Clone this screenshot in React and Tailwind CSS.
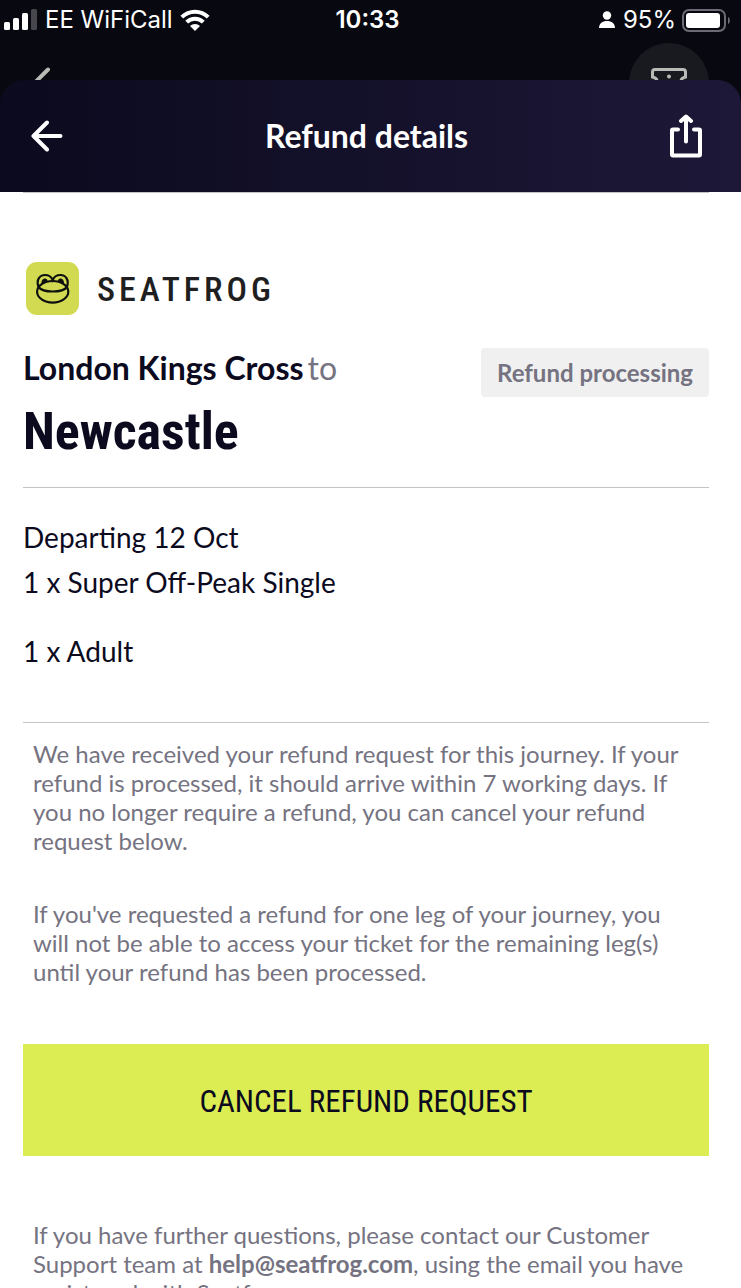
const DIVIDER = "border-t border-[#c4c4c6]"
const CONDENSED = "font-['Roboto_Condensed','Liberation_Sans_Narrow',Roboto,sans-serif]"
const NOTE = "px-[10px] text-2xl leading-[29px] text-[#757381]"

function BackArrow({ className }) {
  return (
    <svg viewBox="0 0 32 32" fill="none" stroke="currentColor" strokeWidth="4" strokeLinecap="round" strokeLinejoin="round" className={className} aria-hidden="true">
      <path d="M16 2.5 2.5 16 16 29.5M3 16h26.5" />
    </svg>
  )
}

function ShareIcon() {
  return (
    <svg viewBox="0 0 32 44" fill="none" stroke="currentColor" strokeWidth="4" strokeLinecap="round" strokeLinejoin="round" className="h-11 w-8" aria-hidden="true">
      <path d="M8 15.500H3Q2 15.500 2 16.500V40.500Q2 41.500 3 41.500H29Q30 41.500 30 40.500V16.500Q30 15.500 29 15.500H24" />
      <path d="M16 27.500V3M11 7 16 2.500 21 7" />
    </svg>
  )
}

function SignalBars() {
  return (
    <svg viewBox="0 0 34 22" fill="currentColor" className="h-[22px] w-[34px]" aria-hidden="true">
      <rect x="0" y="13" width="6" height="8" rx="1.5" />
      <rect x="9" y="9" width="6" height="12" rx="1.5" />
      <rect x="18" y="4" width="6" height="17" rx="1.5" />
      <rect x="27" y="0" width="6" height="21" rx="1.5" opacity="0.25" />
    </svg>
  )
}

function WifiIcon() {
  return (
    <svg viewBox="0 0 30 22" className="h-[22px] w-[30px]" aria-hidden="true">
      <g fill="none" stroke="currentColor" strokeWidth="4">
        <path d="M1.8 8.2a18.7 18.7 0 0 1 26.4 0" />
        <path d="M6.7 13.2a11.7 11.7 0 0 1 16.6 0" />
      </g>
      <path d="M10 17a7.1 7.1 0 0 1 10 0l-5 5z" fill="currentColor" />
    </svg>
  )
}

function PersonIcon() {
  return (
    <svg viewBox="0 0 16 18" fill="currentColor" className="h-[18px] w-4" aria-hidden="true">
      <circle cx="8" cy="4.5" r="4.2" />
      <path d="M0 17c0-4.500 3.500-7 8-7s8 2.500 8 7z" />
    </svg>
  )
}

function BatteryIcon() {
  return (
    <svg viewBox="0 0 49 23" className="h-[23px] w-[49px]" aria-hidden="true">
      <rect x="1" y="1" width="42" height="21" rx="6" fill="none" stroke="#6c6b74" strokeWidth="2" />
      <rect x="4" y="4" width="34" height="15" rx="3" fill="#fff" />
      <path d="M46 8c2.500 1 2.500 6 0 7z" fill="#6c6b74" />
    </svg>
  )
}

function TicketIcon() {
  return (
    <svg viewBox="0 0 36 26" fill="none" stroke="currentColor" strokeWidth="3" className="mt-[25px] h-[26px] w-9" aria-hidden="true">
      <path d="M4 1.500H32Q34.500 1.500 34.500 4V9Q30 10 30 13T34.500 17V22Q34.500 24.500 32 24.500H4Q1.500 24.500 1.500 22V17Q6 16 6 13T1.500 9V4Q1.500 1.500 4 1.500Z" />
      <circle cx="18" cy="8.500" r="2" fill="currentColor" stroke="none" />
    </svg>
  )
}

function FrogLogo() {
  return (
    <svg viewBox="0 0 53 53" className="h-[53px] w-[53px]" aria-hidden="true">
      <rect width="53" height="53" rx="11" fill="#d1da51" />
      <g fill="none" stroke="#0f1010" strokeWidth="2.200">
        <ellipse cx="26.700" cy="29.800" rx="15.600" ry="10.800" />
        <path d="M12.500 25C17 31 36.500 31 41 25" />
        <path d="M12.500 25C10 18 13.500 13 19 13c4 0 6.500 2 7.700 5 1.200-3 3.700-5 7.700-5 5.500 0 9 5 6.500 12" />
      </g>
      <path d="M15.500 21.500c-.5-6 6.500-6.500 6-2zM38 21.500c.5-6-6.500-6.500-6-2z" fill="#0f1010" />
    </svg>
  )
}

function StatusBar() {
  return (
    <div className="grid h-10 grid-cols-[1fr_auto_1fr] items-center pl-1 pr-[10px] font-[Inter,sans-serif] text-2xl leading-10 text-white">
      <div className="flex items-center gap-[7px]">
        <SignalBars />
        <span>EE WiFiCall</span>
        <WifiIcon />
      </div>
      <span className="font-semibold">10:33</span>
      <div className="flex items-center justify-end">
        <PersonIcon />
        <span className="ml-2 mr-[6px]">95%</span>
        <BatteryIcon />
      </div>
    </div>
  )
}

export default function App() {
  return (
    <div className="flex h-screen flex-col overflow-hidden bg-white font-[Lato,sans-serif] text-[#0b0a1e]">
      <div className="shrink-0 bg-[#080811]">
        <StatusBar />

        {/* screen left behind the open sheet */}
        <div className="flex h-10 items-start justify-between overflow-hidden px-8 pt-[3px] text-[#b8bab5]" aria-hidden="true">
          <BackArrow className="mt-6 h-8 w-8" />
          <div className="flex h-20 w-20 shrink-0 justify-center rounded-full bg-[#191a20]">
            <TicketIcon />
          </div>
        </div>

        <header className="flex h-28 items-center justify-between rounded-t-3xl bg-linear-to-r from-[#0b0a1e] to-[#1e1838] pl-[31px] pr-[39px] text-white">
          <button type="button" aria-label="Back">
            <BackArrow className="h-8 w-8" />
          </button>
          <h1 className="text-[32px] leading-10 font-bold">Refund details</h1>
          <button type="button" aria-label="Share">
            <ShareIcon />
          </button>
        </header>
      </div>

      <main className="min-h-0 flex-1 overflow-y-auto pb-10 pl-[23px] pr-8 [scrollbar-width:none]">
        <div className={`${DIVIDER} flex items-center gap-[18px] pl-[3px] pt-[69px]`}>
          <FrogLogo />
          <span className={`${CONDENSED} text-[34px] leading-10 font-medium tracking-[4px] text-[#1f1f21]`}>SEATFROG</span>
        </div>

        <section className="flex items-start justify-between pb-6 pt-[33px]">
          <h2>
            <span className="flex gap-1 text-[32px] leading-10 font-bold">
              London Kings Cross <span className="font-normal text-[#757381]">to</span>
            </span>
            <span className={`${CONDENSED} block pt-3 text-[52px] leading-[63px] font-bold`}>Newcastle</span>
          </h2>
          <p className="rounded bg-[#f0f0f0] px-4 py-[9px] text-2xl leading-[31px] font-bold text-[#757381]">Refund processing</p>
        </section>

        <section className={`${DIVIDER} pb-12 pt-[27px] text-[28px] leading-[45px]`}>
          <p>Departing 12 Oct</p>
          <p>1 x Super Off-Peak Single</p>
          <p className="pt-6">1 x Adult</p>
        </section>

        <section className={`${DIVIDER} pt-4`}>
          <p className={NOTE}>
            We have received your refund request for this journey. If your refund is processed, it should arrive within 7 working days. If you no longer require a refund, you can cancel your refund request below.
          </p>
          <p className={`${NOTE} mt-11`}>
            If you've requested a refund for one leg of your journey, you will not be able to access your ticket for the remaining leg(s) until your refund has been processed.
          </p>
          <button type="button" className={`${CONDENSED} mt-[58px] h-28 w-full bg-[#dbed52] pt-1 text-[31px] leading-10`}>
            CANCEL REFUND REQUEST
          </button>
          <p className={`${NOTE} mt-16`}>
            If you have further questions, please contact our Customer Support team at{" "}
            <a href="mailto:help@seatfrog.com" className="font-bold">help@seatfrog.com</a>, using the email you have registered with Seatfrog.
          </p>
        </section>
      </main>
    </div>
  )
}
